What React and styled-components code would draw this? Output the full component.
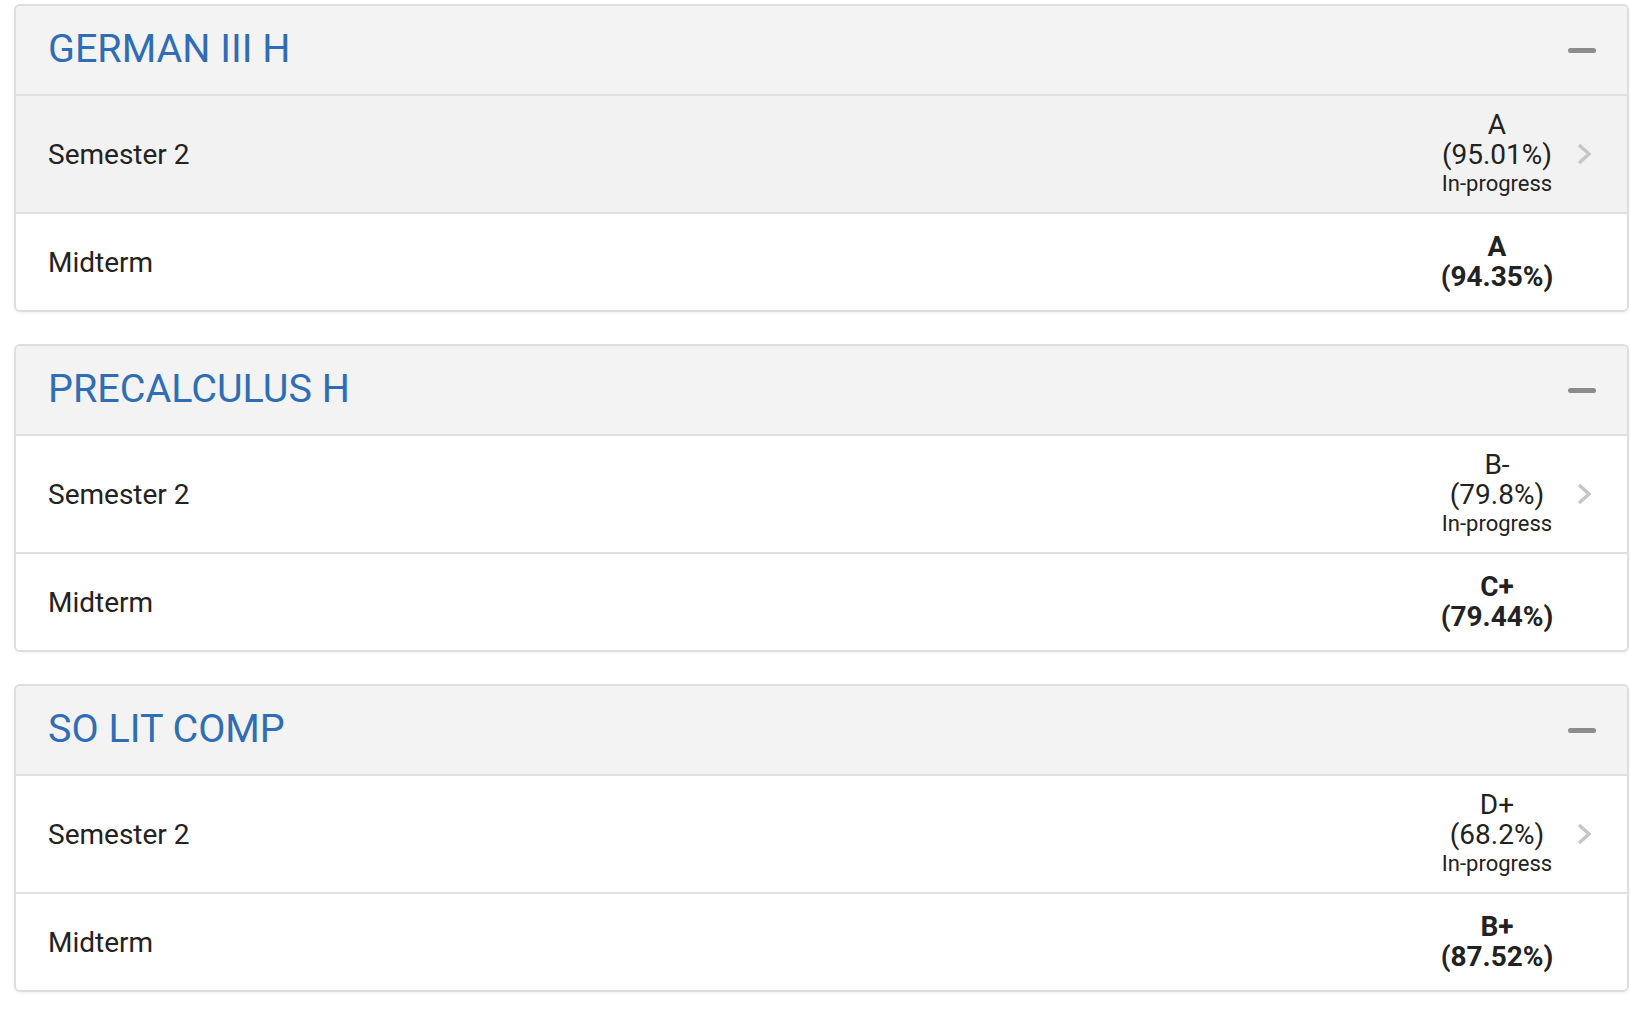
import React from "react";
import styled, { createGlobalStyle } from "styled-components";

const courses = [
	{
		name: "GERMAN III H",
		current: { grade: "A", pct: "95.01%", active: true },
		midterm: { grade: "A", pct: "94.35%" },
	},
	{
		name: "PRECALCULUS H",
		current: { grade: "B-", pct: "79.8%" },
		midterm: { grade: "C+", pct: "79.44%" },
	},
	{
		name: "SO LIT COMP",
		current: { grade: "D+", pct: "68.2%" },
		midterm: { grade: "B+", pct: "87.52%" },
	},
];

export default function App() {
	return (
		<>
			<GlobalStyle />
			<Page>
				{courses.map((c) => (
					<Card key={c.name}>
						<Header>
							<Title>{c.name}</Title>
							<Collapse />
						</Header>
						<Row $active={c.current.active}>
							<Label>Semester 2</Label>
							<GradeBlock>
								<GradeLine>{c.current.grade}</GradeLine>
								<GradeLine>({c.current.pct})</GradeLine>
								<Status>In-progress</Status>
							</GradeBlock>
							<ChevronSlot>
								<svg width="16" height="24" viewBox="0 0 16 24">
									<polyline
										points="3,3 13,12 3,21"
										fill="none"
										stroke="#c6c6c6"
										strokeWidth="3.5"
									/>
								</svg>
							</ChevronSlot>
						</Row>
						<Row>
							<Label>Midterm</Label>
							<GradeBlock $bold>
								<GradeLine>{c.midterm.grade}</GradeLine>
								<GradeLine>({c.midterm.pct})</GradeLine>
							</GradeBlock>
							<ChevronSlot />
						</Row>
					</Card>
				))}
			</Page>
		</>
	);
}

const GlobalStyle = createGlobalStyle`
	body {
		margin: 0;
		background: #fff;
		font-family: Roboto, "Liberation Sans", sans-serif;
		color: #222;
	}
`;

const Page = styled.div`
	padding: 4px 1px 40px 14px;
	display: flex;
	flex-direction: column;
	gap: 32px;
`;

const Card = styled.div`
	border: 2px solid #dedede;
	border-radius: 6px;
	overflow: hidden;
	background: #fff;
	box-shadow: 0 1px 3px rgba(0, 0, 0, 0.06);
`;

const Header = styled.div`
	height: 88px;
	background: #f3f3f3;
	border-bottom: 2px solid #e0e0e0;
	display: flex;
	align-items: center;
	justify-content: space-between;
	padding: 0 31px 0 32px;
`;

const Title = styled.h2`
	margin: 0;
	margin-top: -4px;
	font-size: 39.5px;
	font-weight: 400;
	color: #2f6db6;
`;

const Collapse = styled.span`
	width: 28px;
	height: 5px;
	border-radius: 3px;
	background: #8c8c8c;
`;

const Row = styled.div`
	display: flex;
	align-items: center;
	padding: 14px 35px 14px 32px;
	background: ${(p) => (p.$active ? "#f2f2f2" : "#fff")};
	& + & {
		border-top: 2px solid #e0e0e0;
		padding-top: 18px;
		padding-bottom: 18px;
	}
`;

const Label = styled.div`
	flex: 1;
	font-size: 28px;
`;

const GradeBlock = styled.div`
	width: 140px;
	text-align: center;
	font-size: 28px;
	line-height: 30px;
	font-weight: ${(p) => (p.$bold ? 700 : 400)};
`;

const GradeLine = styled.div``;

const Status = styled.div`
	font-size: 22px;
	line-height: 28px;
`;

const ChevronSlot = styled.div`
	width: 16px;
	height: 24px;
	margin-left: 9px;
	display: flex;
`;
